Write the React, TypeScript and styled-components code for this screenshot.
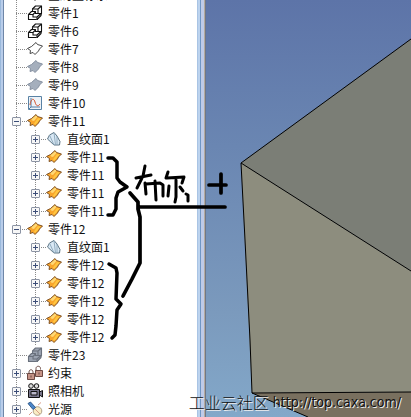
import React from "react";
import styled, { createGlobalStyle } from "styled-components";

const GlobalStyle = createGlobalStyle`
  * { box-sizing: border-box; }
  body { margin: 0; font: 12px/18px "Noto Sans CJK SC", sans-serif; color: #111; background: #fff; }
`;

const Frame = styled.main`
  position: relative;
  display: flex;
  height: 100vh;
  overflow: hidden;
`;

const TreePane = styled.nav`
  flex: 0 0 48%;
  display: flex;
  min-width: 0;
  overflow: hidden;
  background: #fff;
`;

const PaneEdge = styled.div`
  flex: 0 0 4px;
  background: linear-gradient(90deg, #9ab9dc 0 1px, #b9cdea 1px 3px, #6f87a8 3px 4px);
`;

const List = styled.ul`
  flex: 1;
  margin: -14px 0 0;
  padding: 0 0 0 8px;
  list-style: none;
`;

const Row = styled.li`
  display: flex;
  align-items: center;
  height: 18px;
  white-space: nowrap;
`;

const Guide = styled.span`
  flex: none;
  width: 19px;
  height: 18px;
  background: repeating-linear-gradient(180deg, #8a8a8a 0 1px, transparent 1px 2px) 4px 0 / 1px 18px no-repeat;
`;

const Branch = styled.span`
  flex: none;
  display: flex;
  align-items: center;
  width: 15px;
  height: 18px;
  background:
    repeating-linear-gradient(180deg, #8a8a8a 0 1px, transparent 1px 2px) 4px 0 / 1px 18px no-repeat,
    repeating-linear-gradient(90deg, #8a8a8a 0 1px, transparent 1px 2px) 4px 9px / 11px 1px no-repeat;
`;

const Toggle = styled.button`
  display: flex;
  width: 9px;
  height: 9px;
  padding: 0;
  border: 1px solid #8c94a4;
  border-radius: 1px;
  background: #f7f7f7;
`;

const IconSlot = styled.span`
  flex: none;
  width: 16px;
  height: 16px;
  svg { display: block; }
`;

const Label = styled.span`
  padding-left: 5px;
`;

const Splitter = styled.div`
  flex: 0 0 9px;
  background: linear-gradient(90deg, #a9c4e4 0 1px, #bcd3ee 1px 3px, #6f96c4 3px 4px, #bfcbe8 4px 7px, #b5ab9f 7px 8px, #6f7787 8px 9px);
`;

const Viewport = styled.section`
  flex: 1;
  min-width: 0;
  background: linear-gradient(180deg, #5d74a8, #6a86b2 35%, #7b9abd 75%, #83a8c9);
  svg { display: block; width: 100%; height: 100%; }
`;

const Ink = styled.svg`
  position: absolute;
  left: 0;
  top: 0;
  pointer-events: none;
`;

const Watermark = styled.footer`
  position: absolute;
  right: 10px;
  bottom: 4px;
  display: flex;
  align-items: center;
  gap: 4px;
  color: #111;
  font-size: 16px;
  font-weight: 300;
  line-height: 22px;
  text-shadow: 1px 1px 0 #eee;
  white-space: nowrap;
`;

const SiteLink = styled.a`
  color: inherit;
  font: 14px/22px "DejaVu Sans Condensed", "Noto Sans", sans-serif;
  text-decoration: none;
`;

type Kind = "box" | "grayBox" | "outline" | "gray" | "sketch" | "orange" | "fan" | "lock" | "camera" | "light";

const sheet = "M.5 7.5 4.500 5.500 9 1.500 10.500 3.500 15.500 5 12.500 8 11.500 10 8 13.500 6 11.500 3 12.500 3.500 9.500Z";

const Boxes = ({ fill, stroke }: { fill: string; stroke: string }) => (
  <g fill={fill} stroke={stroke} strokeWidth="1.1" strokeLinejoin="round">
    <path d="M5.500 4 8.500 1H14.500V8.500L10 14.500 5.500 9Z" />
    <path d="M5.500 4H11V8.500M11 4 14.500 1" />
    <path d="M1.500 9.500 4.500 6.500H8.500V8.500H14V10.500L10 14.500H1.500Z" />
    <path d="M1.500 9.500H6V12H10V14.500M6 9.500 8.500 7M10 12 14 8.500" />
  </g>
);

const drawings: Record<Kind, React.ReactNode> = {
  box: <Boxes fill="#fff" stroke="#111" />,
  grayBox: <Boxes fill="#9ba3b1" stroke="#6a717d" />,
  outline: <path d={sheet} fill="#fff" stroke="#333" strokeWidth=".9" />,
  gray: <path d={sheet} fill="#a5afbd" stroke="#8590a0" />,
  sketch: (
    <g fill="none">
      <path d="M1.5 1.5H14.5V14.5H1.5Z" fill="#eef3f8" stroke="#5982a5" />
      <path d="M4 3V12H13M4 12 2 14" stroke="#537fa8" />
      <path d="M3 10C4 3 7 3 8 7S11 12 13 9" stroke="#d2502b" />
    </g>
  ),
  orange: (
    <g>
      <path d={sheet} fill="#f9a52b" />
      <path d="M4.500 6 9 2 10.500 4 7 8 5 7.500Z" fill="#ffd873" />
      <path d="M8 12 7 10.500 11 5 14 5.500 11 9Z" fill="#ffc63f" />
      <path d={sheet} fill="none" stroke="#74461a" strokeWidth=".9" />
    </g>
  ),
  fan: (
    <g stroke="#4c6576" strokeWidth=".9" strokeLinejoin="round">
      <path d="M1.500 8 3.500 4 8 1.500 11 5 14 10.500 13.500 14H8Z" fill="#d9e8f4" />
      <path d="M8 14 3.500 4M9.500 14 8 1.500M11 14 11 5" fill="none" stroke="#8aa6b9" />
    </g>
  ),
  lock: (
    <g fill="#c69488" stroke="#5f3a34" strokeWidth=".9">
      <path d="M9 6.500V3.500C9 .5 13.500 .5 13.500 3.500V4.500M2 9V7C2 4 6 4 6 7V8" fill="none" />
      <path d="M8.500 5.500H15.500V11.500H8.500ZM.5 8.500H7.500V14.500H.5Z" />
      <path d="M12 7.500V9.500M4 10.500V12.500" />
    </g>
  ),
  camera: (
    <g fill="#79768c" stroke="#111">
      <circle cx="4" cy="3" r="2.3" fill="#ddd" />
      <circle cx="9.5" cy="3" r="2.3" fill="#ddd" />
      <path d="M1.500 6.500H12.500V14.500H1.500ZM12.500 9 15.500 7.500V14L12.500 12Z" />
      <path d="M4 8.500H10V12H4Z" fill="#bbb8cb" />
    </g>
  ),
  light: (
    <g>
      <circle cx="10.5" cy="10" r="4.3" fill="#f9ecc4" stroke="#a99a80" strokeWidth=".9" />
      <path d="M1 2.500 3.500 1 8.500 6.500 6 8.500Z" fill="#4c86c8" stroke="#2a5586" strokeWidth=".9" />
      <path d="M2 14 5 11M11 4 14 1.500M8 8 13 13" stroke="#d99d88" />
    </g>
  ),
};

interface Node { text: string; kind: Kind; child?: boolean; open?: boolean; toggle?: boolean }

const repeat = (text: string, n: number): Node[] =>
  Array.from({ length: n }, () => ({ text, kind: "orange", child: true, toggle: true }));

const nodes: Node[] = [
  { text: "全局坐标系", kind: "outline", toggle: true },
  { text: "零件1", kind: "box" },
  { text: "零件6", kind: "box" },
  { text: "零件7", kind: "outline" },
  { text: "零件8", kind: "gray" },
  { text: "零件9", kind: "gray" },
  { text: "零件10", kind: "sketch" },
  { text: "零件11", kind: "orange", toggle: true, open: true },
  { text: "直纹面1", kind: "fan", child: true, toggle: true },
  ...repeat("零件11", 4),
  { text: "零件12", kind: "orange", toggle: true, open: true },
  { text: "直纹面1", kind: "fan", child: true, toggle: true },
  ...repeat("零件12", 5),
  { text: "零件23", kind: "grayBox" },
  { text: "约束", kind: "lock", toggle: true },
  { text: "照相机", kind: "camera", toggle: true },
  { text: "光源", kind: "light", toggle: true },
];

const TreeRow = ({ node }: { node: Node }) => (
  <Row>
    {node.child && <Guide />}
    <Branch>
      {node.toggle && (
        <Toggle aria-label={node.text} aria-expanded={!!node.open}>
          <svg width="7" height="7" stroke="#3b4d78">
            <path d={node.open ? "M1 3.5H6" : "M1 3.5H6M3.5 1V6"} />
          </svg>
        </Toggle>
      )}
    </Branch>
    <IconSlot><svg width="16" height="16" viewBox="0 0 16 16">{drawings[node.kind]}</svg></IconSlot>
    <Label>{node.text}</Label>
  </Row>
);

export default function App() {
  return (
    <>
      <GlobalStyle />
      <Frame>
        <TreePane>
          <PaneEdge />
          <List>{nodes.map((node, i) => <TreeRow key={i} node={node} />)}</List>
        </TreePane>
        <Splitter />
        <Viewport>
          <svg viewBox="0 0 205 417" preserveAspectRatio="xMinYMin slice">
            <path d="M35 163 205 39V271Z" fill="#7b7e76" />
            <path d="M35 163 205 271V392L46 393Z" fill="#8d8d7e" />
            <path d="M46 393 205 392V417H102Z" fill="#79705f" />
            <path d="M205 39 35 163 205 271M35 163 39 240 44 340 46 393 205 392M46 393 102 417" fill="none" stroke="#000" />
          </svg>
        </Viewport>
        <Ink width="240" height="350" fill="none" stroke="#000" strokeWidth="3" strokeLinecap="round" strokeLinejoin="round">
          <path d="M108 158H113L117 162V178L120 182 127 187 118 192 116 198V209L113 215H108" strokeWidth="3.5" />
          <path d="M109 264 116 268 117 273 116 299 121 304 117 310 116 326 115 335 112 338" strokeWidth="3.5" />
          <path d="M130 193 138 202V209L140 217V263L132 279 123 296M140 207H225" strokeWidth="3.7" />
          <path d="M209 185H226M221 174V193" strokeWidth="3.7" />
          <path d="M136 178 151 175M145 166 143 176 137 188M145 183 146 194M146 184 160 183 163 185 163 196M155 181 156 200" />
          <path d="M168 172 166 178M167 178 184 177 182 183M176 180V197L175 202M169 186 168 196M180 187 183 191M186 194 188 195V201" />
        </Ink>
        <Watermark><span>工业云社区</span><SiteLink href="http://top.caxa.com/">http://top.caxa.com/</SiteLink></Watermark>
      </Frame>
    </>
  );
}
